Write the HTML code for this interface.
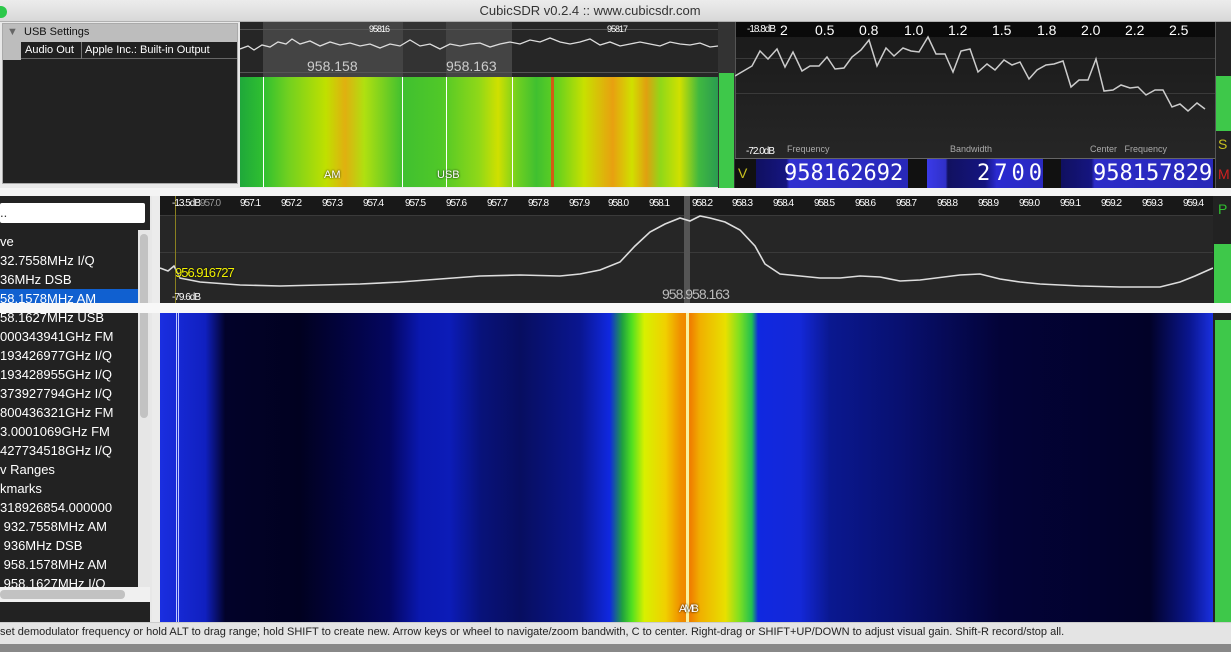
<!DOCTYPE html>
<html><head><meta charset="utf-8"><style>
*{margin:0;padding:0;box-sizing:border-box}
body{width:1231px;height:652px;overflow:hidden;background:#ececec;font-family:"Liberation Sans",sans-serif;position:relative}
.a{position:absolute}
.tk{position:absolute;top:2px;font-size:10px;color:#fff;letter-spacing:-1px}
.lst div{height:19px;line-height:19px;font-size:13px;color:#fff;white-space:nowrap;padding-left:0}
.dgt{position:absolute;top:159px;font-size:22px;line-height:29px;color:#fff;font-family:"DejaVu Sans Mono",monospace;white-space:nowrap}
</style></head><body>
<div class="a" style="left:0;top:0;width:1231px;height:22px;background:linear-gradient(#ececec,#d8d8d8);border-bottom:1px solid #b0b0b0"></div>
<div class="a" style="left:0;top:6px;width:7px;height:12px;background:#2cc84a;border-radius:0 6px 6px 0"></div>
<div class="a" style="left:0;top:3px;width:1180px;text-align:center;font-size:13px;color:#333">CubicSDR v0.2.4 :: www.cubicsdr.com</div>
<div class="a" style="left:0;top:22px;width:240px;height:166px;background:#e8e8e8"></div>
<div class="a" style="left:2px;top:23px;width:236px;height:161px;background:#222;border:1px solid #aaa"></div>
<div class="a" style="left:3px;top:24px;width:234px;height:18px;background:#bdbdbd"></div>
<div class="a" style="left:7px;top:26px;font-size:11px;color:#666">▼</div>
<div class="a" style="left:24px;top:26px;font-size:11px;color:#111">USB Settings</div>
<div class="a" style="left:3px;top:42px;width:18px;height:18px;background:#bdbdbd"></div>
<div class="a" style="left:21px;top:42px;width:216px;height:17px;background:#202020;border-bottom:1px solid #666"></div>
<div class="a" style="left:81px;top:42px;width:1px;height:17px;background:#777"></div>
<div class="a" style="left:25px;top:44px;font-size:11px;color:#fff">Audio Out</div>
<div class="a" style="left:85px;top:44px;font-size:11px;color:#fff">Apple Inc.: Built-in Output</div>
<div class="a" style="left:240px;top:22px;width:478px;height:55px;background:#262626"></div>
<div class="a" style="left:263px;top:22px;width:140px;height:55px;background:#444"></div>
<div class="a" style="left:403px;top:22px;width:43px;height:55px;background:#333"></div>
<div class="a" style="left:446px;top:22px;width:66px;height:55px;background:#444"></div>
<div class="a" style="left:240px;top:29px;width:478px;height:1px;background:#555"></div>
<div class="a" style="left:240px;top:72px;width:478px;height:1px;background:#555"></div>
<div class="tk" style="left:369px;top:24px;font-size:9px">95816</div>
<div class="tk" style="left:607px;top:24px;font-size:9px">95817</div>
<div class="a" style="left:307px;top:58px;font-size:14px;color:#ccc">958.158</div>
<div class="a" style="left:446px;top:58px;font-size:14px;color:#ccc">958.163</div>
<svg class="a" style="left:240px;top:22px" width="478" height="55"><polyline fill="none" stroke="#ddd" stroke-width="1.3" points="0,27 8,24 14,28 22,23 30,25 38,20 46,22 52,17 60,22 70,19 80,24 90,20 100,23 110,21 120,24 130,22 140,26 150,22 160,24 170,18 180,24 190,22 200,27 210,22 220,24 230,22 240,21 250,25 260,22 270,20 280,22 290,18 300,20 310,16 320,20 330,22 340,20 350,17 360,23 370,20 380,24 390,22 400,20 410,22 420,24 430,20 440,22 450,23 460,21 470,25 478,24"/></svg>
<div class="a" style="left:240px;top:77px;width:478px;height:110px;background:linear-gradient(90deg,#1fa83a 0%,#30c030 5%,#70d020 10%,#c0e000 18%,#e0b010 22%,#b0e010 26%,#40c030 34%,#50c828 42%,#90d818 50%,#d0e000 54%,#70d020 58%,#40c030 62%,#60d020 66%,#c8e000 72%,#e8a010 78%,#d0e000 82%,#e0a010 85%,#90d818 88%,#d0e000 92%,#40b840 96%,#2a9c50 100%)"></div>
<div class="a" style="left:551px;top:77px;width:3px;height:110px;background:#f04010;opacity:.8"></div>
<div class="a" style="left:402px;top:77px;width:1px;height:110px;background:#fff"></div>
<div class="a" style="left:446px;top:77px;width:1px;height:110px;background:#fff"></div>
<div class="a" style="left:512px;top:77px;width:1px;height:110px;background:#fff"></div>
<div class="a" style="left:263px;top:77px;width:1px;height:110px;background:#fff"></div>
<div class="a" style="left:324px;top:169px;font-size:11px;color:#fff;text-shadow:0 0 2px #000">AM</div>
<div class="a" style="left:437px;top:169px;font-size:11px;color:#fff;text-shadow:0 0 2px #000">USB</div>
<div class="a" style="left:718px;top:22px;width:17px;height:166px;background:#333"></div>
<div class="a" style="left:719px;top:73px;width:15px;height:115px;background:#3ec84a"></div>
<div class="a" style="left:735px;top:22px;width:480px;height:136px;background:linear-gradient(#1a1a1a,#262626)"></div>
<div class="a" style="left:735px;top:22px;width:480px;height:15px;background:#0a0a0a"></div>
<div class="a" style="left:735px;top:58px;width:480px;height:1px;background:#3a3a3a"></div>
<div class="a" style="left:735px;top:93px;width:480px;height:1px;background:#3a3a3a"></div>
<div class="a" style="left:735px;top:22px;width:1px;height:166px;background:#555"></div>
<div class="a" style="left:747px;top:24px;font-size:10px;color:#fff;letter-spacing:-1px">-18.8dB</div>
<div class="a" style="left:746px;top:146px;font-size:10px;color:#fff;letter-spacing:-1px">-72.0dB</div>
<div class="a" style="left:735px;top:22px;width:480px;font-size:14px;color:#fff">
<span class="a" style="left:45px;top:0">2</span><span class="a" style="left:80px">0.5</span><span class="a" style="left:124px">0.8</span><span class="a" style="left:169px">1.0</span><span class="a" style="left:213px">1.2</span><span class="a" style="left:257px">1.5</span><span class="a" style="left:302px">1.8</span><span class="a" style="left:346px">2.0</span><span class="a" style="left:390px">2.2</span><span class="a" style="left:434px">2.5</span></div>
<svg class="a" style="left:735px;top:22px" width="480" height="136"><polyline fill="none" stroke="#ccc" stroke-width="1.5" points="0,54 17,44 25,29 33,37 42,27 50,45 58,30 67,49 75,44 84,44 92,35 100,47 109,46 117,35 126,28 134,18 142,44 151,26 159,34 168,26 176,29 184,30 193,15 201,32 210,32 218,50 226,29 235,27 243,50 252,42 260,48 269,38 277,43 285,40 294,57 302,48 311,43 319,42 328,39 336,65 344,58 353,58 361,37 369,69 378,68 386,63 395,66 403,65 411,73 420,68 428,68 437,85 445,82 453,89 462,81 470,87"/></svg>
<div class="a" style="left:787px;top:144px;font-size:9px;color:#aaa">Frequency</div>
<div class="a" style="left:950px;top:144px;font-size:9px;color:#aaa">Bandwidth</div>
<div class="a" style="left:1090px;top:144px;font-size:9px;color:#aaa">Center&nbsp;&nbsp; Frequency</div>
<div class="a" style="left:735px;top:158px;width:480px;height:30px;background:#111;border-top:1px solid #666"></div>
<div class="a" style="left:738px;top:165px;font-size:14px;color:#c8c020">V</div>
<div class="a" style="left:756px;top:159px;width:152px;height:29px;background:linear-gradient(90deg,#101060 0%,#151580 20%,#3030d0 22%,#2828b8 100%)"></div>
<div class="a" style="left:927px;top:159px;width:116px;height:29px;background:linear-gradient(90deg,#3a3ae8 0%,#3030c8 16%,#111160 18%,#151580 50%,#2a2ad0 60%,#2a2ac0 100%)"></div>
<div class="a" style="left:1061px;top:159px;width:152px;height:29px;background:linear-gradient(90deg,#101060 0%,#151580 20%,#2c2cc8 22%,#2828b8 100%)"></div>
<div class="dgt" style="left:784px">958162692</div>
<div class="dgt" style="left:977px;letter-spacing:4px">2700</div>
<div class="dgt" style="left:1093px">958157829</div>
<div class="a" style="left:1215px;top:22px;width:16px;height:166px;background:#222;border-left:1px solid #555"></div>
<div class="a" style="left:1216px;top:76px;width:15px;height:55px;background:#3ec84a"></div>
<div class="a" style="left:1218px;top:136px;font-size:14px;color:#c8c020">S</div>
<div class="a" style="left:1218px;top:166px;font-size:14px;color:#d02020">M</div>
<div class="a" style="left:0;top:188px;width:1231px;height:8px;background:#f4f4f4"></div>
<div class="a" style="left:0;top:196px;width:152px;height:426px;background:#e8e8e8"></div>
<div class="a" style="left:0;top:196px;width:150px;height:406px;background:#222"></div>
<div class="a" style="left:0;top:203px;width:145px;height:20px;background:#fff;border-radius:2px"></div>
<div class="a" style="left:0;top:205px;font-size:13px;color:#333">..</div>
<div class="a" style="left:138px;top:230px;width:12px;height:372px;background:#e6e6e6"></div>
<div class="a" style="left:140px;top:234px;width:8px;height:184px;background:#c2c2c2;border-radius:4px"></div>
<div class="a" style="left:0;top:289px;width:138px;height:19px;background:#1060d0"></div>
<div class="a lst" style="left:0;top:232px;width:138px;overflow:hidden">
<div>ve</div><div>32.7558MHz I/Q</div><div>36MHz DSB</div><div>58.1578MHz AM</div><div>58.1627MHz USB</div><div>000343941GHz FM</div><div>193426977GHz I/Q</div><div>193428955GHz I/Q</div><div>373927794GHz I/Q</div><div>800436321GHz FM</div><div>3.0001069GHz FM</div><div>427734518GHz I/Q</div><div>v Ranges</div><div>kmarks</div><div>318926854.000000</div><div>&nbsp;932.7558MHz AM</div><div>&nbsp;936MHz DSB</div><div>&nbsp;958.1578MHz AM</div><div>&nbsp;958.1627MHz I/Q</div></div>
<div class="a" style="left:0;top:587px;width:150px;height:15px;background:#f0f0f0"></div>
<div class="a" style="left:0;top:590px;width:125px;height:9px;background:#c2c2c2;border-radius:4px"></div>
<div class="a" style="left:0;top:602px;width:150px;height:20px;background:#222"></div>
<div class="a" style="left:160px;top:196px;width:1053px;height:107px;background:#262626"></div>
<div class="a" style="left:160px;top:196px;width:1053px;height:19px;background:#181818"></div>
<div class="a" style="left:160px;top:215px;width:1053px;height:1px;background:#3a3a3a"></div>
<div class="a" style="left:160px;top:252px;width:1053px;height:1px;background:#3a3a3a"></div>
<div class="a" style="left:684px;top:196px;width:6px;height:107px;background:#555"></div>
<div class="a" style="left:175px;top:196px;width:1px;height:107px;background:#8a8020"></div>
<div class="a" style="left:160px;top:198px;width:1053px;height:14px;font-size:10px;color:#fff;letter-spacing:-1px;white-space:nowrap">
<span class="a" style="left:12px">-13.5dB</span><span class="a" style="left:40px;color:#999">957.0</span><span class="a" style="left:80px">957.1</span><span class="a" style="left:121px">957.2</span><span class="a" style="left:162px">957.3</span><span class="a" style="left:203px">957.4</span><span class="a" style="left:245px">957.5</span><span class="a" style="left:286px">957.6</span><span class="a" style="left:327px">957.7</span><span class="a" style="left:368px">957.8</span><span class="a" style="left:409px">957.9</span><span class="a" style="left:448px">958.0</span><span class="a" style="left:489px">958.1</span><span class="a" style="left:532px">958.2</span><span class="a" style="left:572px">958.3</span><span class="a" style="left:613px">958.4</span><span class="a" style="left:654px">958.5</span><span class="a" style="left:695px">958.6</span><span class="a" style="left:736px">958.7</span><span class="a" style="left:777px">958.8</span><span class="a" style="left:818px">958.9</span><span class="a" style="left:859px">959.0</span><span class="a" style="left:900px">959.1</span><span class="a" style="left:941px">959.2</span><span class="a" style="left:982px">959.3</span><span class="a" style="left:1023px">959.4</span></div>
<svg class="a" style="left:160px;top:196px" width="1053" height="107"><polyline fill="none" stroke="#ddd" stroke-width="1.6" points="0,72 8,75 14,70 20,82 40,86 80,89 120,90 160,89 200,88 240,86 280,83 320,80 360,79 400,80 420,78 440,74 460,66 475,50 490,36 505,28 520,22 530,25 540,20 550,22 565,26 580,34 595,50 605,68 620,78 640,80 660,82 680,82 700,80 720,81 740,85 760,84 800,79 820,78 840,83 860,86 880,88 920,90 960,91 1000,91 1020,86 1035,80 1053,72"/></svg>
<div class="a" style="left:175px;top:265px;font-size:13px;color:#f0f000;letter-spacing:-1px;text-shadow:0 0 2px #000">956.916727</div>
<div class="a" style="left:172px;top:292px;font-size:10px;color:#fff;letter-spacing:-1px">-79.6dB</div>
<div class="a" style="left:662px;top:286px;font-size:14px;color:#bbb;letter-spacing:-1px">958.958.163</div>
<div class="a" style="left:1213px;top:196px;width:18px;height:107px;background:#222"></div>
<div class="a" style="left:1218px;top:201px;font-size:14px;color:#30c030">P</div>
<div class="a" style="left:1214px;top:244px;width:17px;height:59px;background:#3ec84a"></div>
<div class="a" style="left:0;top:303px;width:1231px;height:10px;background:#f8f8f8"></div>
<div class="a" style="left:160px;top:313px;width:1053px;height:309px;background:linear-gradient(90deg,#1a2ee0 0%,#1020c0 4.3%,#02022a 6.2%,#010120 13.3%,#040660 21.8%,#0a18b0 24.7%,#0c1cb8 27.5%,#08127a 30.5%,#070e60 34.2%,#0a1690 39.9%,#1028e0 42.7%,#20a040 43.9%,#50e020 44.8%,#d8f000 46%,#f0d000 48%,#f09000 49.4%,#f08000 50.4%,#f0b000 51.3%,#e8e000 53.7%,#80e020 55%,#20c050 56.2%,#1028e0 56.8%,#1428d8 60.8%,#0a1890 63.6%,#081070 70.3%,#030338 79.8%,#020228 94%,#0a1690 97.8%,#1a30e0 100%)"></div>
<div class="a" style="left:176px;top:313px;width:1px;height:309px;background:#c0c8ff"></div>
<div class="a" style="left:178px;top:313px;width:1px;height:309px;background:#c0c8ff"></div>
<div class="a" style="left:686px;top:313px;width:3px;height:309px;background:#f8f0a0"></div>
<div class="a" style="left:679px;top:603px;font-size:11px;color:#fff;text-shadow:0 0 2px #000;letter-spacing:-2px">AMB</div>
<div class="a" style="left:1213px;top:313px;width:18px;height:309px;background:#222"></div>
<div class="a" style="left:1215px;top:320px;width:16px;height:302px;background:#3ec84a"></div>
<div class="a" style="left:0;top:622px;width:1231px;height:22px;background:#e4e4e4;border-top:1px solid #ccc"></div>
<div class="a" style="left:0;top:626px;font-size:11px;color:#222;white-space:nowrap">set demodulator frequency or hold ALT to drag range; hold SHIFT to create new. Arrow keys or wheel to navigate/zoom bandwith, C to center. Right-drag or SHIFT+UP/DOWN to adjust visual gain. Shift-R record/stop all.</div>
<div class="a" style="left:0;top:644px;width:1231px;height:8px;background:#888"></div>
</body></html>
